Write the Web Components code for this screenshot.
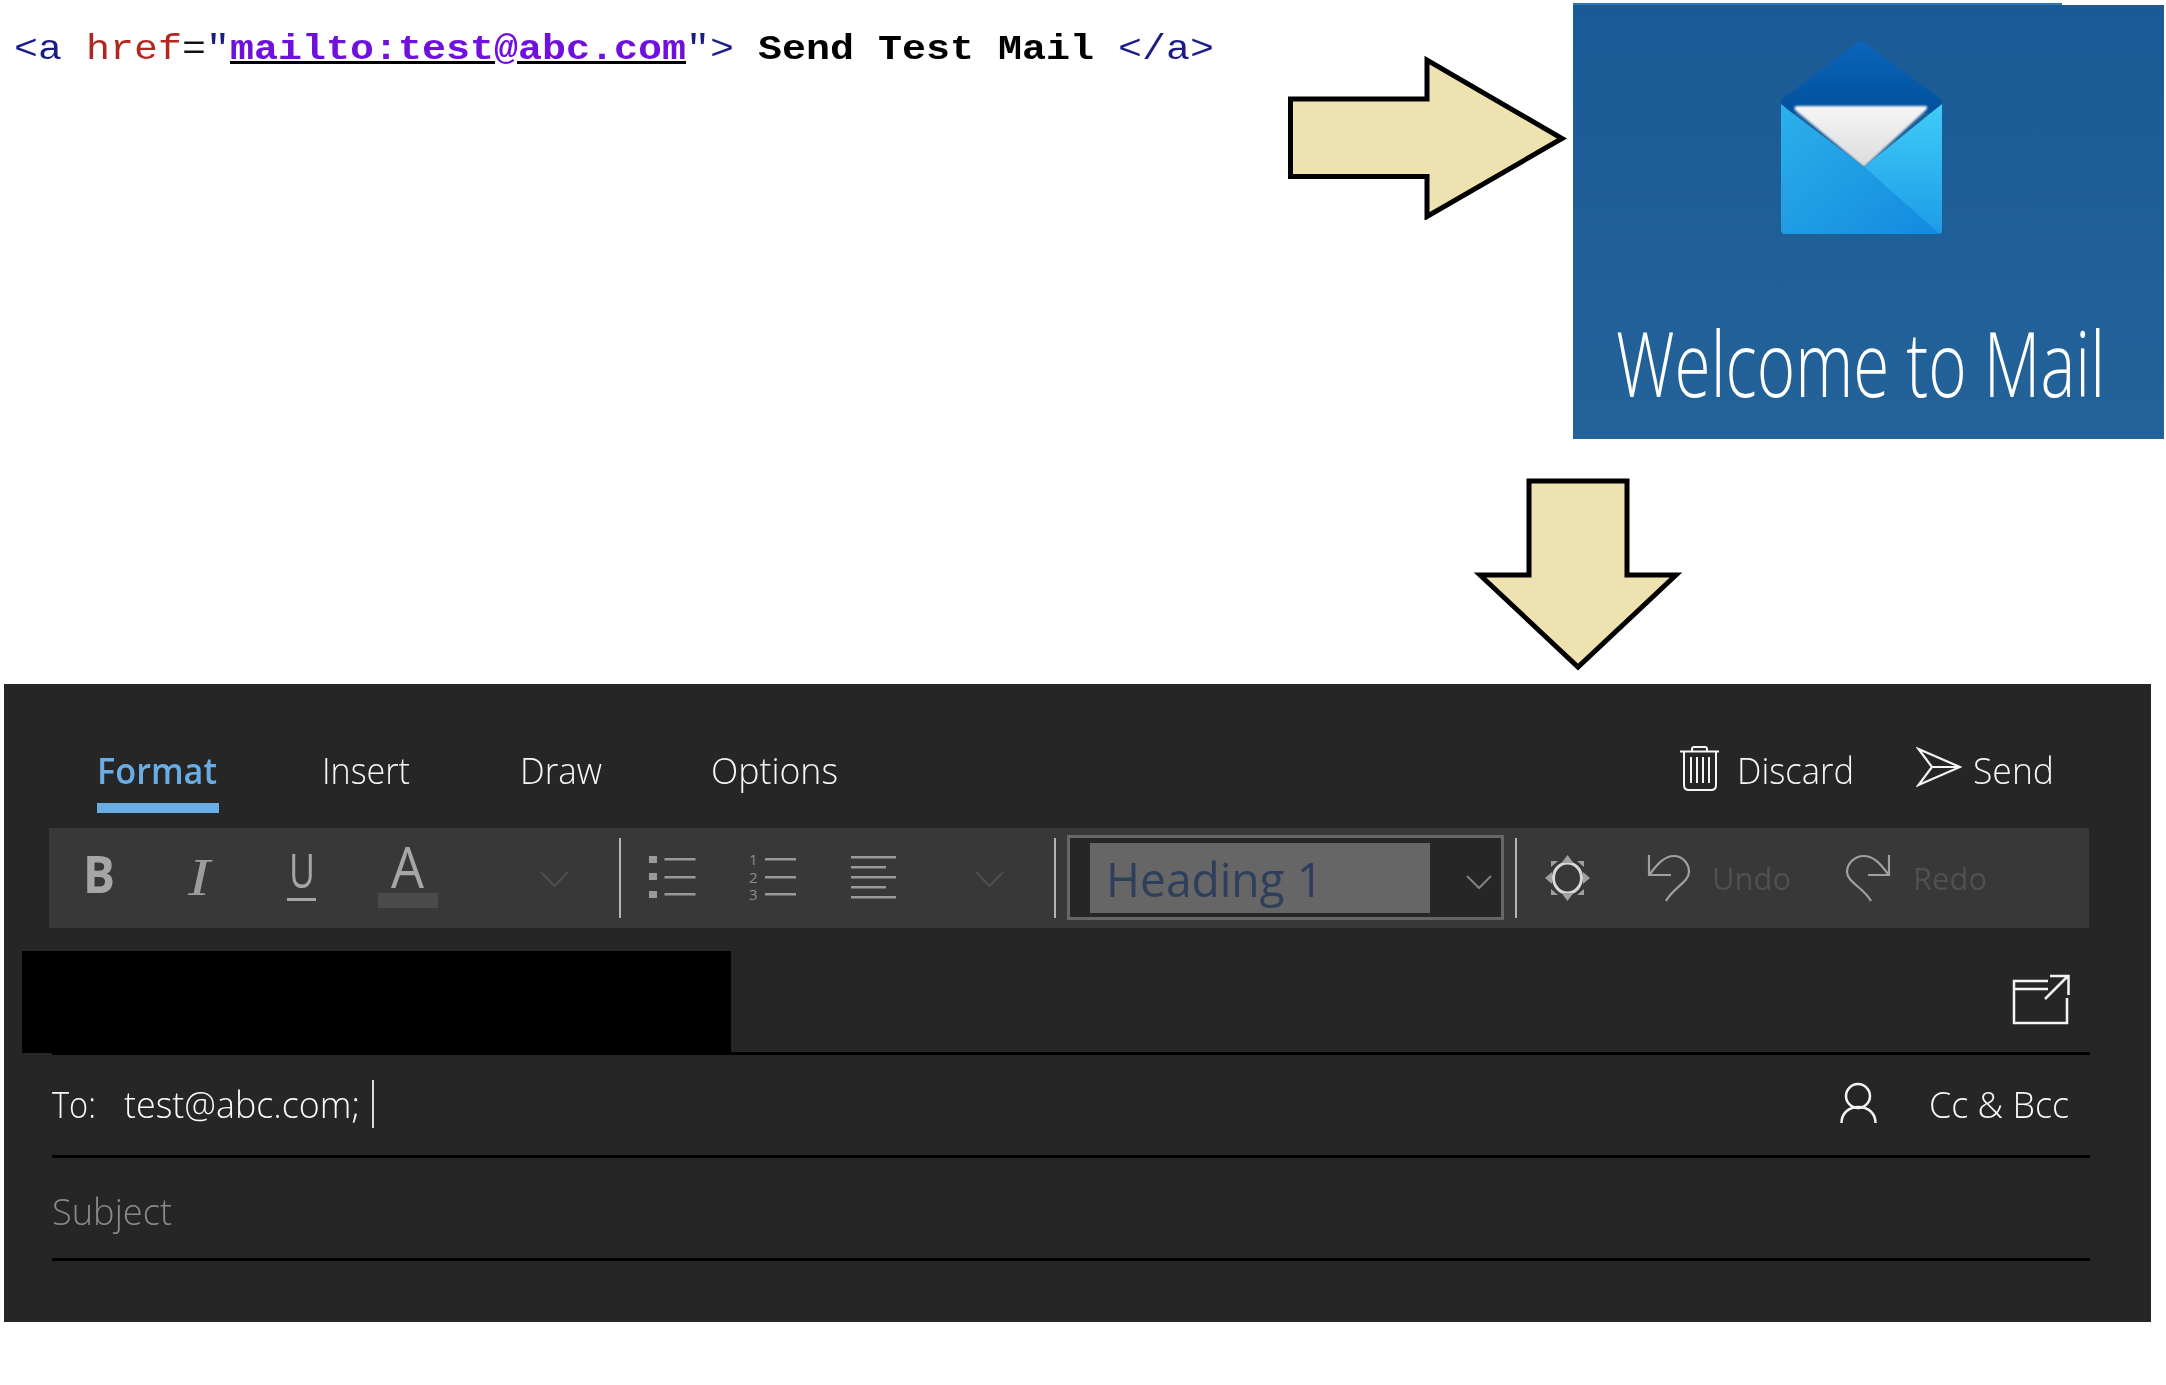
<!DOCTYPE html>
<html><head><meta charset="utf-8"><title>Send Test Mail</title>
<style>html,body{margin:0;background:#fff}</style></head>
<body><mail-demo></mail-demo>
<script>
class SegText extends HTMLElement{
  constructor(){super();this.attachShadow({mode:'open'}).innerHTML=`<style>:host{display:inline-block;white-space:nowrap}span{display:inline-block;transform-origin:0 50%}</style><span><slot></slot></span>`}
  connectedCallback(){
    const w=+this.getAttribute('w');this.style.width=w+'px';
    const s=this.shadowRoot.querySelector('span');const m=s.getBoundingClientRect().width;
    if(m>0)s.style.transform=`scaleX(${w/m})`;
  }
}
customElements.define('seg-text',SegText);
const def=(n,html)=>customElements.define(n,class extends HTMLElement{constructor(){super();this.attachShadow({mode:'open'}).innerHTML=html}});

def('code-snippet',`<style>
:host{display:block;box-sizing:border-box;padding:30px 0 0 14px;font:35px/40px "Liberation Mono",monospace;color:#000}
.t{color:#1c1c86}.r{color:#b3261e}.k{color:#111}
.l{color:#7010dc;font-weight:700;text-decoration:underline;text-decoration-color:#000;text-underline-offset:2px}
.b{font-weight:700;color:#000}</style>
<seg-text w="1200"><span class="t">&lt;a</span> <span class="r">href</span><span class="k">=</span><span class="t">"</span><span class="l">mailto:test@abc.com</span><span class="t">"&gt;</span> <span class="b">Send Test Mail</span> <span class="t">&lt;/a&gt;</span></seg-text>`);

def('right-arrow',`<style>:host{display:block;width:282px;height:165px;margin-top:55px}svg{display:block}</style>
<svg width="282" height="165" viewBox="1285 55 282 165"><path d="M1290.500 99H1427V60L1562 138.500L1427 216.500V176.500H1290.500Z" fill="#eee3b0" stroke="#000" stroke-width="5" stroke-linejoin="miter" stroke-miterlimit="4"/></svg>`);

def('down-arrow',`<style>:host{display:block;width:208px;height:196px;margin:37px 0 0 1474px}svg{display:block}</style>
<svg width="208" height="196" viewBox="1474 476 208 196"><path d="M1529 481H1627V575H1676L1578 667L1480 575H1529Z" fill="#eee3b0" stroke="#000" stroke-width="5" stroke-linejoin="miter" stroke-miterlimit="4"/></svg>`);

def('mail-splash',`<style>
:host{display:block;width:591px;margin-left:6px;padding-top:3px}
.strip{width:489px;height:2px;background:#2a78b4}
.panel{height:434px;background:linear-gradient(180deg,#1a5a96,#246399);box-sizing:border-box;padding-top:35px;display:flex;flex-direction:column}
svg{display:block;margin-left:206px}
.w{margin:66px 0 0 43px;font:300 90px/122px "Open Sans",sans-serif;color:#fff;height:122px}
</style><div class="strip"></div><div class="panel">
<svg width="165" height="195" viewBox="1779 40 165 195">
<defs>
<linearGradient id="f" x1="0" y1="0" x2="0" y2="1"><stop offset="0" stop-color="#0a66bc"/><stop offset="1" stop-color="#02509c"/></linearGradient>
<linearGradient id="l" x1="0" y1="0" x2="1" y2="1"><stop offset="0" stop-color="#2cb0ea"/><stop offset="1" stop-color="#128adf"/></linearGradient>
<linearGradient id="d" x1="0" y1="0" x2="0" y2="1"><stop offset="0" stop-color="#3fcdf8"/><stop offset="1" stop-color="#1d9ce6"/></linearGradient>
<linearGradient id="p" x1="0" y1="0" x2="0" y2="1"><stop offset="0" stop-color="#f6f6f6"/><stop offset="1" stop-color="#dcdcdc"/></linearGradient>
<filter id="s" x="-5%" y="-5%" width="110%" height="110%"><feGaussianBlur stdDeviation="1.200"/></filter>
</defs>
<path d="M1861 40L1942 100L1942 113H1781V100Z" fill="url(#f)"/>
<path d="M1798 106H1925Q1929 106 1926 110L1864 167L1795 110Q1793 106 1798 106Z" fill="url(#p)" filter="url(#s)"/>
<path d="M1942 104V230Q1942 234 1938 234L1864 167L1932 112Z" fill="url(#d)"/>
<path d="M1781 104L1791 112L1864 167L1940 234H1785Q1781 234 1781 230Z" fill="url(#l)"/>
</svg>
<seg-text class="w" w="489">Welcome to Mail</seg-text>
</div>`);

def('compose-tabs',`<style>
:host{display:flex;height:144px;box-sizing:border-box;padding:62px 0 0 93px;font:350 36px/50px "Open Sans",sans-serif;color:#f7f7f7}
.tabs{display:grid;grid-template-columns:225px 198px 191px 127px;height:50px}
.on{color:#6aade4;font-weight:600}
.bar{width:122px;height:10px;background:#6aade4;margin-top:7px}
.acts{margin-left:auto;display:flex;padding-right:97px}
svg{display:block;margin-top:-2px}
</style>
<div class="tabs"><div class="on"><seg-text w="120">Format</seg-text><div class="bar"></div></div>
<div><seg-text w="88">Insert</seg-text></div><div><seg-text w="82">Draw</seg-text></div><div><seg-text w="127">Options</seg-text></div></div>
<div class="acts">
<svg width="42" height="50" viewBox="1688 744 42 50" fill="none" stroke="#f5f5f5" stroke-width="2"><path d="M1689 751.500H1728M1701 751V749Q1701 747 1703 747H1714Q1716 747 1716 749V751M1693 752V785Q1693 790 1698 790H1720Q1725 790 1725 785V752M1700 757V783M1706 757V783M1712 757V783M1718 757V783"/></svg>
<seg-text w="117" style="margin-left:16px">Discard</seg-text>
<svg width="46" height="50" viewBox="1925 744 46 50" fill="none" stroke="#f5f5f5" stroke-width="2.200" stroke-linejoin="miter" style="margin-left:62px"><path d="M1927.500 749L1969 767L1927.500 785L1941 767ZM1941 767H1969"/></svg>
<seg-text w="81" style="margin-left:11px">Send</seg-text>
</div>`);

def('format-toolbar',`<style>
:host{display:flex;height:100px;width:2040px;margin-left:45px;background:#383838;color:#a6a6a6;font-family:"Open Sans",sans-serif}
svg{display:block;flex:none}
.x{flex:none}
.b{margin:10px 0 0 34px;font:700 52px/70px "Open Sans",sans-serif}
.i{margin:20px 0 0 73px;font:italic 400 52px/60px "Liberation Serif",serif;color:#9c9c9c}
.u{margin:16px 0 0 77px;width:29px;font:400 47px/52px "Open Sans",sans-serif;height:54px;border-bottom:3px solid #a6a6a6}
.u seg-text{margin-left:2px}
.a{margin:11px 0 0 62px;width:60px;font:400 57px/54px "Open Sans",sans-serif}
.a seg-text{margin-left:13px;display:block;height:54px}
.a i{display:block;width:60px;height:15px;background:#4a4a4a}
.sep{width:2.500px;height:80px;margin-top:10px;background:#b4b4b4}
.hb{box-sizing:border-box;margin:7px 0 0 10.500px;width:437px;height:85px;border:3px solid #666;background:#262626;display:flex;padding:5px 0 0 20.500px}
.hg{width:340px;height:70px;background:#666;box-sizing:border-box;padding:4px 0 0 16px;font:400 47px/64px "Open Sans",sans-serif;color:#2e3f5c}
.ht{margin:29px 0 0 0;font:400 31px/42px "Open Sans",sans-serif;color:#505050}
.dig{font:400 15px "Open Sans",sans-serif;fill:#8c8c8c}
</style>
<seg-text class="x b" w="32">B</seg-text>
<seg-text class="x i" w="22">I</seg-text>
<div class="x u"><seg-text w="26">U</seg-text></div>
<div class="x a"><seg-text w="33">A</seg-text><i></i></div>
<svg width="30" height="100" viewBox="540 828 30 100" style="margin-left:102px" fill="none" stroke="#4f4f4f" stroke-width="2"><path d="M541 872L554.500 886L568 872"/></svg>
<div class="x sep" style="margin-left:48.500px"></div>
<svg width="48" height="100" viewBox="649 828 48 100" style="margin-left:28px" fill="#9a9a9a"><path d="M649 856h8v7h-8zM649 873h8v7h-8zM649 891h8v7h-8z"/><path d="M664.500 858h31v2.500h-31zM664.500 876h31v2.500h-31zM664.500 893h31v2.500h-31z"/></svg>
<svg width="48" height="100" viewBox="749 828 48 100" style="margin-left:52px"><text class="dig" x="749" y="865">1</text><text class="dig" x="749" y="883">2</text><text class="dig" x="749" y="900">3</text><path d="M765 858h31v2.500h-31zM765 876h31v2.500h-31zM765 893h31v2.500h-31z" fill="#9a9a9a"/></svg>
<svg width="46" height="100" viewBox="851 828 46 100" style="margin-left:54px" fill="#9a9a9a"><path d="M851 856h45v2.500h-45zM851 866h35v2.500h-35zM851 876h45v2.500h-45zM851 886h35v2.500h-35zM851 896h45v2.500h-45z"/></svg>
<svg width="30" height="100" viewBox="975 828 30 100" style="margin-left:78px" fill="none" stroke="#4f4f4f" stroke-width="2"><path d="M976 872L989.500 886L1003 872"/></svg>
<div class="x sep" style="margin-left:48.500px"></div>
<div class="x hb"><div class="hg"><seg-text w="217">Heading 1</seg-text></div>
<svg width="26" height="30" viewBox="1472 850 26 30" style="margin:21px 0 0 36px" fill="none" stroke="#808080" stroke-width="2"><path d="M1473 862L1485 874L1497 862"/></svg></div>
<div class="x sep" style="margin-left:11px"></div>
<svg width="46" height="100" viewBox="1552 828 46 100" style="margin-left:27.500px"><ellipse cx="1574.500" cy="878" rx="14" ry="15" fill="none" stroke="#d8d8d8" stroke-width="3"/><path d="M1574.500 855l6 8h-12zM1574.500 901l6-8h-12zM1552 878l7-6v12zM1597 878l-7-6v12zM1558 861h7l-7 6zM1591 861h-7l7 6zM1558 895h7l-7-6zM1591 895h-7l7-6z" fill="#a0a0a0"/></svg>
<svg width="44" height="100" viewBox="1654 828 44 100" style="margin-left:56px" fill="none" stroke="#a0a0a0" stroke-width="2.200"><path d="M1656 855V875H1678M1657 874C1665 863 1672 856 1681 856C1690 856 1696 864 1696 872C1696 882 1680 888 1673 901"/></svg>
<seg-text class="x ht" w="79" style="margin-left:21px">Undo</seg-text>
<svg width="46" height="100" viewBox="1857 828 46 100" style="margin-left:54px" fill="none" stroke="#a0a0a0" stroke-width="2.200"><path d="M1901 855V875H1880M1900 874C1892 863 1885 856 1876 856C1866 856 1859 864 1859 872C1859 882 1876 888 1883 901"/></svg>
<seg-text class="x ht" w="74" style="margin-left:22px">Redo</seg-text>`);

def('address-fields',`<style>
:host{display:block;margin:0 61px 0 48px;font:350 36px/50px "Open Sans",sans-serif;color:#fafafa}
.row{display:flex;border-bottom:3px solid #000;box-sizing:content-box}
.r1{margin-top:23px;height:101px}
.r2{height:75px;padding-top:25px}
.r3{height:71px;padding-top:29px;color:#8a8a8a}
.blk{width:709px;height:102px;margin-left:-30px;background:#000;flex:none}
svg{display:block;flex:none}
.cur{width:2px;height:48px;background:#d8d8d8;margin:0 0 0 12px;align-self:flex-start;flex:none}
</style>
<div class="row r1"><div class="blk"></div>
<svg width="58" height="52" viewBox="2012 974 58 52" style="margin:23px 20px 0 auto" fill="none" stroke="#f5f5f5" stroke-width="2.500"><path d="M2048 981H2014V1023H2067V998M2014 989H2048M2045 999L2068 976M2050 976H2068.500V995"/></svg></div>
<div class="row r2"><seg-text w="44">To:</seg-text><seg-text w="236" style="margin-left:28px">test@abc.com;</seg-text><div class="cur"></div>
<svg width="38" height="50" viewBox="1840 1082 38 50" style="margin-left:auto" fill="none" stroke="#f5f5f5" stroke-width="2.500"><circle cx="1858" cy="1098" r="12"/><path d="M1841.500 1125C1841.500 1115 1849 1109 1858.500 1109C1868 1109 1875.500 1115 1875.500 1125"/></svg>
<seg-text w="140" style="margin:0 21px 0 51px">Cc &amp; Bcc</seg-text></div>
<div class="row r3"><seg-text w="120">Subject</seg-text></div>`);

def('compose-panel',`<style>:host{display:block;width:2147px;height:638px;margin-left:4px;background:#262626}</style>
<compose-tabs></compose-tabs><format-toolbar></format-toolbar><address-fields></address-fields>`);

def('mail-demo',`<style>:host{display:block;width:2166px;height:1385px;overflow:hidden}
.top{display:flex;height:439px}code-snippet{width:1285px;flex:none}
.mid{height:245px;overflow:hidden}</style>
<div class="top"><code-snippet></code-snippet><right-arrow></right-arrow><mail-splash></mail-splash></div>
<div class="mid"><down-arrow></down-arrow></div>
<compose-panel></compose-panel>`);
</script></body></html>
